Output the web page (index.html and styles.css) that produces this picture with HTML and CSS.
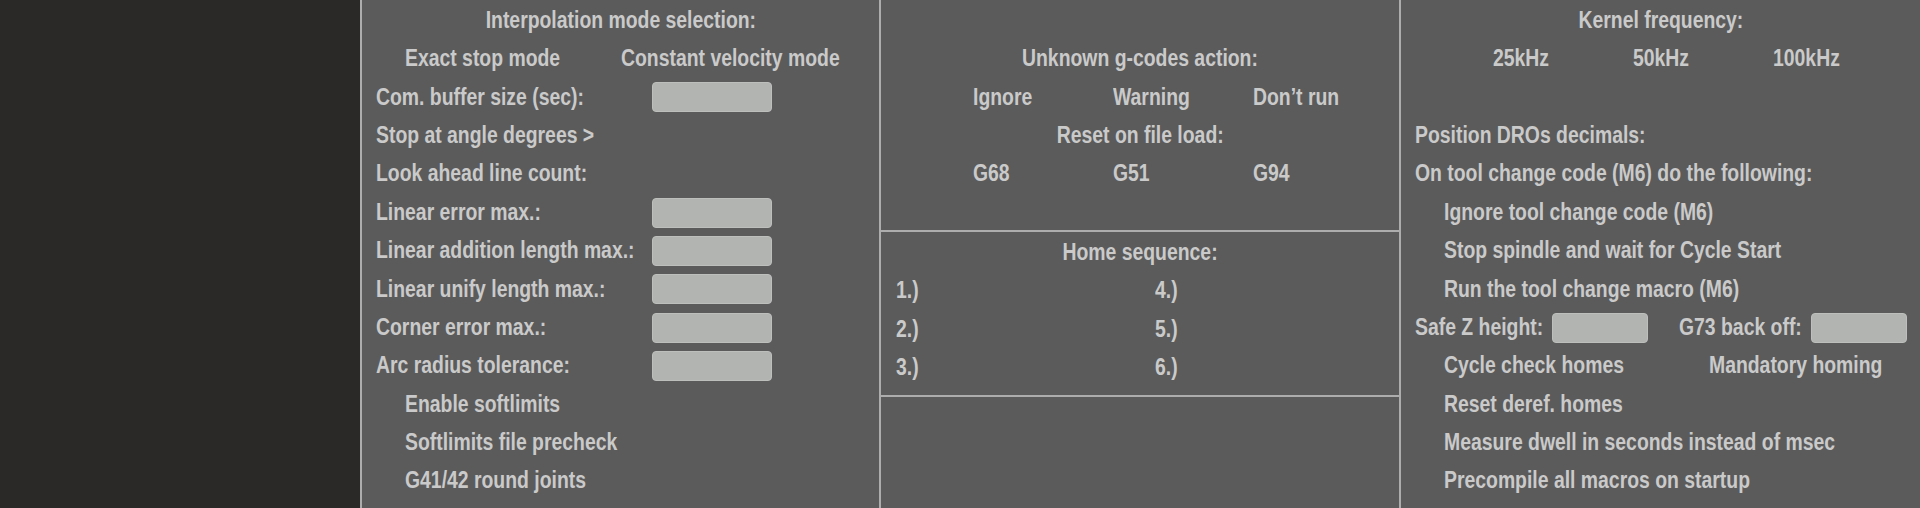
FILE: index.html
```html
<!DOCTYPE html>
<html lang="en">
<head>
<meta charset="utf-8">
<title>Settings</title>
<link rel="stylesheet" href="styles.css">
</head>
<body>
<div class="app">
  <aside class="sidebar"></aside>

  <section class="col col-motion">
    <div class="row center"><span class="t">Interpolation mode selection:</span></div>
    <div class="row modes"><span class="t opt">Exact stop mode</span><span class="t">Constant velocity mode</span></div>
    <div class="row field"><span class="t">Com. buffer size (sec):</span><span class="input"></span></div>
    <div class="row"><span class="t">Stop at angle degrees &gt;</span></div>
    <div class="row"><span class="t">Look ahead line count:</span></div>
    <div class="row field"><span class="t">Linear error max.:</span><span class="input"></span></div>
    <div class="row field"><span class="t">Linear addition length max.:</span><span class="input"></span></div>
    <div class="row field"><span class="t">Linear unify length max.:</span><span class="input"></span></div>
    <div class="row field"><span class="t">Corner error max.:</span><span class="input"></span></div>
    <div class="row field"><span class="t">Arc radius tolerance:</span><span class="input"></span></div>
    <div class="row"><span class="t opt">Enable softlimits</span></div>
    <div class="row"><span class="t opt">Softlimits file precheck</span></div>
    <div class="row"><span class="t opt">G41/42 round joints</span></div>
  </section>

  <section class="col col-mid">
    <div class="block gcodes">
      <div class="row"></div>
      <div class="row center"><span class="t">Unknown g-codes action:</span></div>
      <div class="row triple"><span class="t">Ignore</span><span class="t">Warning</span><span class="t">Don’t run</span></div>
      <div class="row center"><span class="t">Reset on file load:</span></div>
      <div class="row triple"><span class="t">G68</span><span class="t">G51</span><span class="t">G94</span></div>
    </div>
    <div class="block home">
      <div class="row center"><span class="t">Home sequence:</span></div>
      <div class="row homes"><span class="t">1.)</span><span class="t">4.)</span></div>
      <div class="row homes"><span class="t">2.)</span><span class="t">5.)</span></div>
      <div class="row homes"><span class="t">3.)</span><span class="t">6.)</span></div>
    </div>
    <div class="block rest"></div>
  </section>

  <section class="col col-general">
    <div class="row center"><span class="t">Kernel frequency:</span></div>
    <div class="row triple"><span class="t">25kHz</span><span class="t">50kHz</span><span class="t">100kHz</span></div>
    <div class="row"></div>
    <div class="row"><span class="t">Position DROs decimals:</span></div>
    <div class="row"><span class="t">On tool change code (M6) do the following:</span></div>
    <div class="row"><span class="t opt">Ignore tool change code (M6)</span></div>
    <div class="row"><span class="t opt">Stop spindle and wait for Cycle Start</span></div>
    <div class="row"><span class="t opt">Run the tool change macro (M6)</span></div>
    <div class="row safez">
      <span class="t">Safe Z height:</span><span class="input small"></span>
      <span class="t">G73 back off:</span><span class="input small"></span>
    </div>
    <div class="row checks"><span class="t opt">Cycle check homes</span><span class="t">Mandatory homing</span></div>
    <div class="row"><span class="t opt">Reset deref. homes</span></div>
    <div class="row"><span class="t opt">Measure dwell in seconds instead of msec</span></div>
    <div class="row"><span class="t opt">Precompile all macros on startup</span></div>
  </section>
</div>
</body>
</html>
```

FILE: styles.css
```css
html, body {
  margin: 0;
  padding: 0;
  background: #2a2928;
}

body {
  font-family: "Liberation Sans", Arial, sans-serif;
  font-weight: bold;
  font-size: 23.5px;
  color: #cacaca;
  width: 1920px;
  height: 508px;
  overflow: hidden;
}

.app {
  display: grid;
  grid-template-columns: 360px 519px 520px 521px;
  height: 508px;
}

.sidebar {
  background: #2a2928;
}

.col {
  background: #5b5b5b;
  border-left: 2px solid #adadad;
  display: flex;
  flex-direction: column;
  min-width: 0;
}

.col-motion,
.col-general {
  padding-left: 14px;
}

.row {
  height: 38.4px;
  flex: 0 0 38.4px;
  display: flex;
  align-items: center;
  white-space: nowrap;
}

/* narrow (condensed) rendering of the label text, like Arial Narrow */
.t {
  display: inline-block;
  transform: scaleX(0.825);
  transform-origin: left center;
  margin-top: 3px;
  line-height: 1.1;
}

.center {
  justify-content: center;
}

.center .t {
  transform-origin: center center;
}

.col-motion .center,
.col-general .center {
  margin-left: -14px;
}

.t.opt {
  margin-left: 29px;
}

.modes {
  display: grid;
  grid-template-columns: 245px auto;
  align-items: center;
}

.field {
  display: grid;
  grid-template-columns: 276px 120px;
  align-items: center;
}

.input {
  display: block;
  height: 30px;
  box-sizing: border-box;
  background: #b2b4b2;
  border: 1px solid #bdbfbd;
  border-radius: 4px;
  margin-top: 3px;
}

.input.small {
  width: 96px;
}

/* middle column */
.col-mid .block {
  border-bottom: 2px solid #adadad;
  display: flex;
  flex-direction: column;
}

.gcodes {
  height: 230px;
  flex: 0 0 230px;
  overflow: hidden;
}

.home {
  height: 165px;
  flex: 0 0 165px;
  padding: 0 0 0 15px;
  box-sizing: border-box;
}

.home .center {
  margin-left: -15px;
}

.col-mid .block.rest {
  border-bottom: none;
  flex: 1 1 auto;
}

.triple {
  display: grid;
  grid-template-columns: 140px 140px auto;
  align-items: center;
  padding-left: 92px;
}

.col-general .triple {
  padding-left: 78px;
}

.homes {
  display: grid;
  grid-template-columns: 259px auto;
  align-items: center;
}

.safez {
  display: grid;
  grid-template-columns: 137px 127px 132px 96px;
  align-items: center;
}

.checks {
  display: grid;
  grid-template-columns: 294px auto;
  align-items: center;
}
```
